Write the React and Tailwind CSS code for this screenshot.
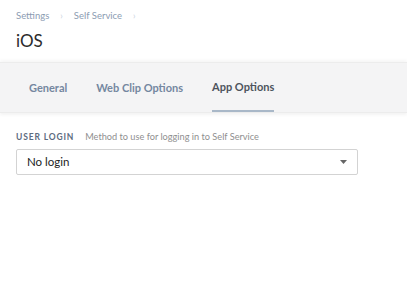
import React from 'react';

function Crumb({ children }) {
  return (
    <>
      <span>{children}</span>
      <span className="mx-[11px] text-[#c9d1dc] text-[9px]">&#8250;</span>
    </>
  );
}

export default function App() {
  return (
    <div className="w-[407px] h-[294px] bg-white font-['Lato',sans-serif] overflow-hidden">
      <div className="px-4 pt-[10px]">
        <div className="flex items-center text-[9.5px] text-[#8c9cb2] h-[12px]">
          <Crumb>Settings</Crumb>
          <Crumb>Self Service</Crumb>
        </div>
        <h1 className="mt-[9px] text-[17px] leading-[20px] text-[#2b2b2b]">iOS</h1>
      </div>

      <div className="mt-[11px] h-[51px] bg-[#f4f4f5] border-y border-[#ececec] shadow-[0_-2px_3px_rgba(0,0,0,0.04),0_2px_3px_rgba(0,0,0,0.05)] flex items-stretch pl-[29px] gap-[29px]">
        <button className="text-[11px] font-bold text-[#7487a0] pt-[1px]">General</button>
        <button className="text-[11px] font-bold text-[#7487a0] pt-[1px]">Web Clip Options</button>
        <button className="relative text-[11px] font-bold text-[#4d535c] pt-[1px] border-b-2 border-[#a9b8c8]">App Options</button>
      </div>

      <div className="px-4 pt-[17px]">
        <div className="flex items-baseline gap-[11px]">
          <span className="text-[8.5px] font-bold tracking-[0.1em] text-[#5c6b80]">USER LOGIN</span>
          <span className="text-[9.2px] text-[#8f8f8f]">Method to use for logging in to Self Service</span>
        </div>
        <div className="mt-[5px] w-[342px] h-[26px] border border-[#d3d3d3] rounded-[2px] flex items-center justify-between pl-[10px] pr-[10px]">
          <span className="text-[11.5px] text-[#222]">No login</span>
          <svg width="7" height="4" viewBox="0 0 7 4"><path d="M0 0h7L3.5 4z" fill="#666" /></svg>
        </div>
      </div>
    </div>
  );
}
